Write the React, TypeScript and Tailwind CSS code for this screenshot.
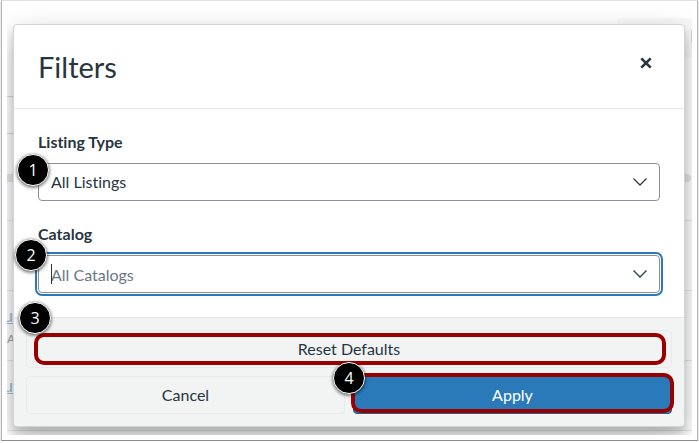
import React from 'react';
import clsx from 'clsx';

interface StepBadgeProps {
    step: number;
    className: string;
}

const StepBadge: React.FC<StepBadgeProps> = ({ step, className }) => (
    <span
        className={clsx(
            'absolute z-10 flex size-8 items-center justify-center rounded-full border border-white bg-black font-["Open_Sans"] text-base leading-none text-white shadow-[0_1px_3px_1px_rgba(0,0,0,0.45)]',
            className
        )}
    >
        {step}
    </span>
);

const Chevron: React.FC = () => (
    <svg
        viewBox="0 0 14 8"
        className="pointer-events-none absolute top-[15px] right-[13px] h-2 w-3.5"
        fill="none"
        stroke="#2d3b45"
        strokeWidth="1.3"
    >
        <path d="M0.5 0.5 L7 7 L13.5 0.5" />
    </svg>
);

// Listings page that stays visible around the edges of the dialog
const PageBehind: React.FC = () => (
    <div aria-hidden="true" className="absolute inset-0 flex flex-col overflow-hidden text-[#9dbddd]">
        <div className="flex h-[90px] items-start justify-end pt-3">
            <div className="flex h-10 w-[75px] items-center justify-end rounded-l bg-[#f8f8f8]">
                <span className="mb-1 h-3 w-px bg-gray-300" />
            </div>
        </div>
        <div className="h-[38px] w-12 border-y border-gray-300" />
        <div className="h-10" />
        <div className="mr-px h-2 rounded-r-full bg-[#e3e5e8]" />
        <div className="h-[39px] border-b border-gray-200" />
        <div className="h-[70px] border-b border-gray-200" />
        <div className="h-[70px] border-b border-gray-200 pt-3">
            <p className="-ml-1 text-lg leading-6 underline">u</p>
            <p className="pt-1 text-xs leading-4 text-gray-400">A</p>
        </div>
        <div className="h-[70px] border-b border-gray-200 pt-3">
            <p className="-ml-1 text-lg leading-6 underline">u</p>
        </div>
    </div>
);

const fieldClass =
    'block h-[38px] w-full appearance-none rounded border border-[#8b919b] bg-white px-3 text-base text-[#273540] placeholder:text-[#6a7883] outline-none';

const buttonClass = 'h-[38px] w-full rounded border text-base';

export default function App() {
    return (
        <div className="font-[Lato,sans-serif] text-[#273540] [font-variant-ligatures:none]">
            <div className="mx-px border border-[#b5b5b5] border-t-[#e2e2e2] border-b-[#8a8a8a] bg-white p-[5px] shadow-[0_1px_2px_rgba(0,0,0,0.25)]">
                <div className="relative overflow-hidden pt-[18px] pr-[7px] pb-2 pl-[6px]">
                    <PageBehind />

                    <div
                        role="dialog"
                        aria-labelledby="filters-title"
                        className="relative rounded border border-[#d2d4d7] bg-white bg-clip-padding shadow-[0_6px_7px_rgba(0,0,0,0.14),0_10px_28px_rgba(0,0,0,0.25)]"
                    >
                        {/* Header */}
                        <header className="flex h-21 items-center justify-between border-b border-[#e5e6e8] px-6">
                            <h1 id="filters-title" className="text-[29px] leading-9">Filters</h1>
                            <button type="button" aria-label="Close" className="mb-2 flex size-7 items-center justify-center">
                                <svg viewBox="0 0 12 12" className="size-3" stroke="#273540" strokeWidth="2.6">
                                    <path d="M1.3 1.3 L10.7 10.7 M10.7 1.3 L1.3 10.7" />
                                </svg>
                            </button>
                        </header>

                        {/* Fields */}
                        <div className="space-y-6 p-6">
                            <div>
                                <label htmlFor="listing-type" className="mb-3 block text-base leading-[18px] font-bold">
                                    Listing Type
                                </label>
                                <div className="relative">
                                    <select id="listing-type" className={fieldClass}>
                                        <option>All Listings</option>
                                    </select>
                                    <Chevron />
                                    <StepBadge step={1} className="-top-[9px] -left-[21px]" />
                                </div>
                            </div>
                            <div>
                                <label htmlFor="catalog" className="mb-3 block text-base leading-[18px] font-bold">
                                    Catalog
                                </label>
                                <div className="relative rounded outline-2 outline-offset-1 outline-[#2a7ab9]">
                                    <input id="catalog" type="text" placeholder="All Catalogs" className={fieldClass} />
                                    <span className="absolute top-[9px] left-[13px] h-5 w-px bg-[#273540]" />
                                    <Chevron />
                                    <StepBadge step={2} className="-top-4 -left-[23px]" />
                                </div>
                            </div>
                        </div>

                        {/* Actions */}
                        <footer className="grid grid-cols-2 gap-2 rounded-b border-t border-[#e5e6e8] bg-[#f2f4f4] p-3">
                            <div className="relative col-span-2">
                                <button type="button" className={clsx(buttonClass, 'border-[#e8eaeb] bg-[#f2f4f4]')}>
                                    Reset Defaults
                                </button>
                                <span className="pointer-events-none absolute inset-y-[3px] right-[6px] left-2 rounded-[10px] border-4 border-[#990000]" />
                                <StepBadge step={3} className="-top-7 -left-[7px]" />
                            </div>
                            <button type="button" className={clsx(buttonClass, 'border-[#e8eaeb] bg-[#f2f4f4]')}>
                                Cancel
                            </button>
                            <div className="relative">
                                <button type="button" className={clsx(buttonClass, 'border-[#235f8f] bg-[#2a7ab9] text-white')}>
                                    Apply
                                </button>
                                <span className="pointer-events-none absolute -inset-x-[2px] -top-[3px] bottom-px rounded-[10px] border-4 border-[#990000]" />
                                <StepBadge step={4} className="-top-[14px] -left-5" />
                            </div>
                        </footer>
                    </div>
                </div>
            </div>
        </div>
    );
}
